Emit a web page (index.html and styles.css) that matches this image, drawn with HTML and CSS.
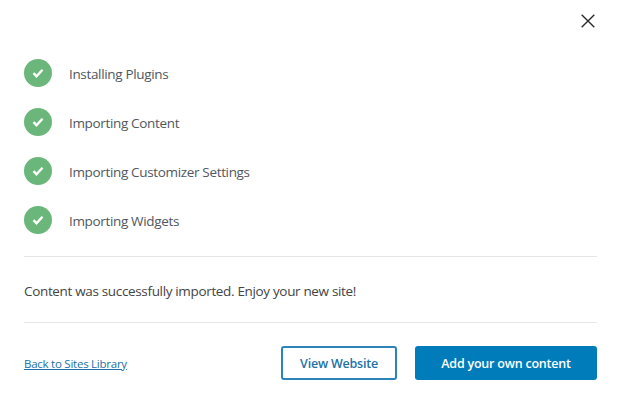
FILE: index.html
```html
<!DOCTYPE html>
<html lang="en">
<head>
<meta charset="utf-8">
<title>Import complete</title>
<link rel="stylesheet" href="styles.css">
</head>
<body>
<main class="modal">
  <div class="top">
    <button class="close" aria-label="Close">
      <svg width="14" height="14" viewBox="0 0 14 14"><path d="M.7.7l12.6 12.6M13.3.7L.7 13.3" stroke="#2b2b2b" stroke-width="1.4" fill="none"/></svg>
    </button>
  </div>
  <ul class="steps">
    <li class="step"><span class="tick"><svg width="12" height="10" viewBox="0 0 12 10"><path d="M1.5 5.2l3 3 6-6.4" stroke="#fff" stroke-width="2.4" fill="none"/></svg></span><span class="label">Installing Plugins</span></li>
    <li class="step"><span class="tick"><svg width="12" height="10" viewBox="0 0 12 10"><path d="M1.5 5.2l3 3 6-6.4" stroke="#fff" stroke-width="2.4" fill="none"/></svg></span><span class="label">Importing Content</span></li>
    <li class="step"><span class="tick"><svg width="12" height="10" viewBox="0 0 12 10"><path d="M1.5 5.2l3 3 6-6.4" stroke="#fff" stroke-width="2.4" fill="none"/></svg></span><span class="label">Importing Customizer Settings</span></li>
    <li class="step"><span class="tick"><svg width="12" height="10" viewBox="0 0 12 10"><path d="M1.5 5.2l3 3 6-6.4" stroke="#fff" stroke-width="2.4" fill="none"/></svg></span><span class="label">Importing Widgets</span></li>
  </ul>
  <p class="message">Content was successfully imported. Enjoy your new site!</p>
  <div class="footer">
    <a class="back" href="#">Back to Sites Library</a>
    <div class="actions">
      <a class="btn btn-outline" href="#">View Website</a>
      <a class="btn btn-solid" href="#">Add your own content</a>
    </div>
  </div>
</main>
</body>
</html>
```
FILE: styles.css
```css
* { box-sizing: border-box; }
html, body { margin: 0; height: 100%; background: #fff; }
body { font-family: "Open Sans", sans-serif; font-size: 13.5px; letter-spacing: -.34px; color: #50575e; overflow: hidden; }
.modal { padding: 0 23px 0 24px; }
.top { height: 59px; display: flex; justify-content: flex-end; padding: 14px 0 0; margin-right: 2px; }
.close { border: 0; background: none; padding: 0; width: 14px; height: 14px; display: block; }
.close svg { display: block; }
.steps { list-style: none; margin: 0; padding: 0 0 22px; border-bottom: 1px solid #e6e6e6; display: flex; flex-direction: column; gap: 21px; }
.step { display: flex; align-items: center; height: 28px; gap: 17px; }
.label { margin-top: 2px; }
.tick { width: 28px; height: 28px; border-radius: 50%; background: #6bb77b; display: flex; align-items: center; justify-content: center; }
.message { margin: 0; height: 66px; line-height: 68px; border-bottom: 1px solid #e6e6e6; color: #444; }
.footer { display: flex; justify-content: space-between; align-items: center; margin-top: 23px; }
.back { font-size: 11.5px; letter-spacing: -.25px; color: #2271a8; }
.actions { display: flex; gap: 18px; }
.btn { display: flex; align-items: center; justify-content: center; height: 34px; border-radius: 3px; font-size: 12.5px; letter-spacing: -.22px; font-weight: 600; text-decoration: none; }
.btn-outline { width: 116px; border: 2px solid #2b83b6; color: #2271a8; }
.btn-solid { width: 182px; background: #007cba; color: #fff; }
```
